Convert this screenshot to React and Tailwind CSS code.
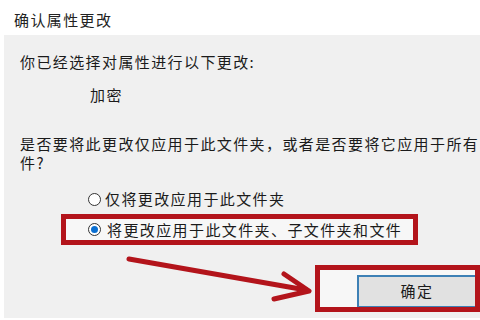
import React from 'react';

const font = { fontFamily: '"Noto Sans CJK SC", "Noto Sans", sans-serif' };

function Radio({ checked }) {
  return (
    <span className="flex h-[13px] w-[13px] shrink-0 items-center justify-center rounded-full border border-[#333] bg-white">
      {checked && <span className="h-[7px] w-[7px] rounded-full bg-[#0a6fd1]" />}
    </span>
  );
}

export default function App() {
  return (
    <div className="relative h-[320px] w-[480px] overflow-hidden bg-white text-[15px] tracking-[1.4px] text-[#1b1b1b]" style={font}>
      {/* title */}
      <div className="flex h-[35px] items-center pl-[14px] pt-[3px] leading-none text-[#222]">确认属性更改</div>

      {/* dialog body */}
      <div className="ml-[4px] h-[283px] bg-[#f0f0f0] pl-[16px] pt-[17px]">
        <div className="leading-[20px]">你已经选择对属性进行以下更改:</div>
        <div className="ml-[70px] mt-[13px] leading-[20px]">加密</div>

        <div className="mt-[29px] whitespace-nowrap leading-[19px]">
          <div>是否要将此更改仅应用于此文件夹，或者是否要将它应用于所有</div>
          <div>件?</div>
        </div>

        <div className="ml-[68px] mt-[17px] flex h-[20px] items-center gap-[4px] leading-[20px]">
          <Radio checked={false} />
          <span>仅将更改应用于此文件夹</span>
        </div>

        <div className="ml-[41px] mt-[5px] flex h-[31px] w-[357px] items-center border-[5px] border-[#b3141b] bg-[#f7f7f7] pl-[22px]">
          <div className="flex items-center gap-[6px] leading-[20px]">
            <Radio checked />
            <span>将更改应用于此文件夹、子文件夹和文件</span>
          </div>
        </div>

        <div className="ml-[295px] mt-[20px] flex h-[47px] w-[165px] border-[5px] border-[#b3141b] bg-[#f7f7f7] pl-[37px] pt-[5px]">
          <button className="flex flex-1 items-center justify-center border-l-2 border-t-2 border-b border-[#3d80b5] bg-[#e1e1e1] pb-[2px] text-[15px] leading-none tracking-[1.4px] text-[#1b1b1b]">
            确定
          </button>
        </div>
      </div>

      {/* annotation arrow */}
      <svg className="pointer-events-none absolute left-0 top-0" width="480" height="320" viewBox="0 0 480 320">
        <g stroke="#b3141b" strokeWidth="5" strokeLinecap="round" strokeLinejoin="round" fill="none">
          <line x1="129" y1="259" x2="306" y2="290" />
          <polyline points="284,274 309,291 274,299" />
        </g>
      </svg>
    </div>
  );
}
